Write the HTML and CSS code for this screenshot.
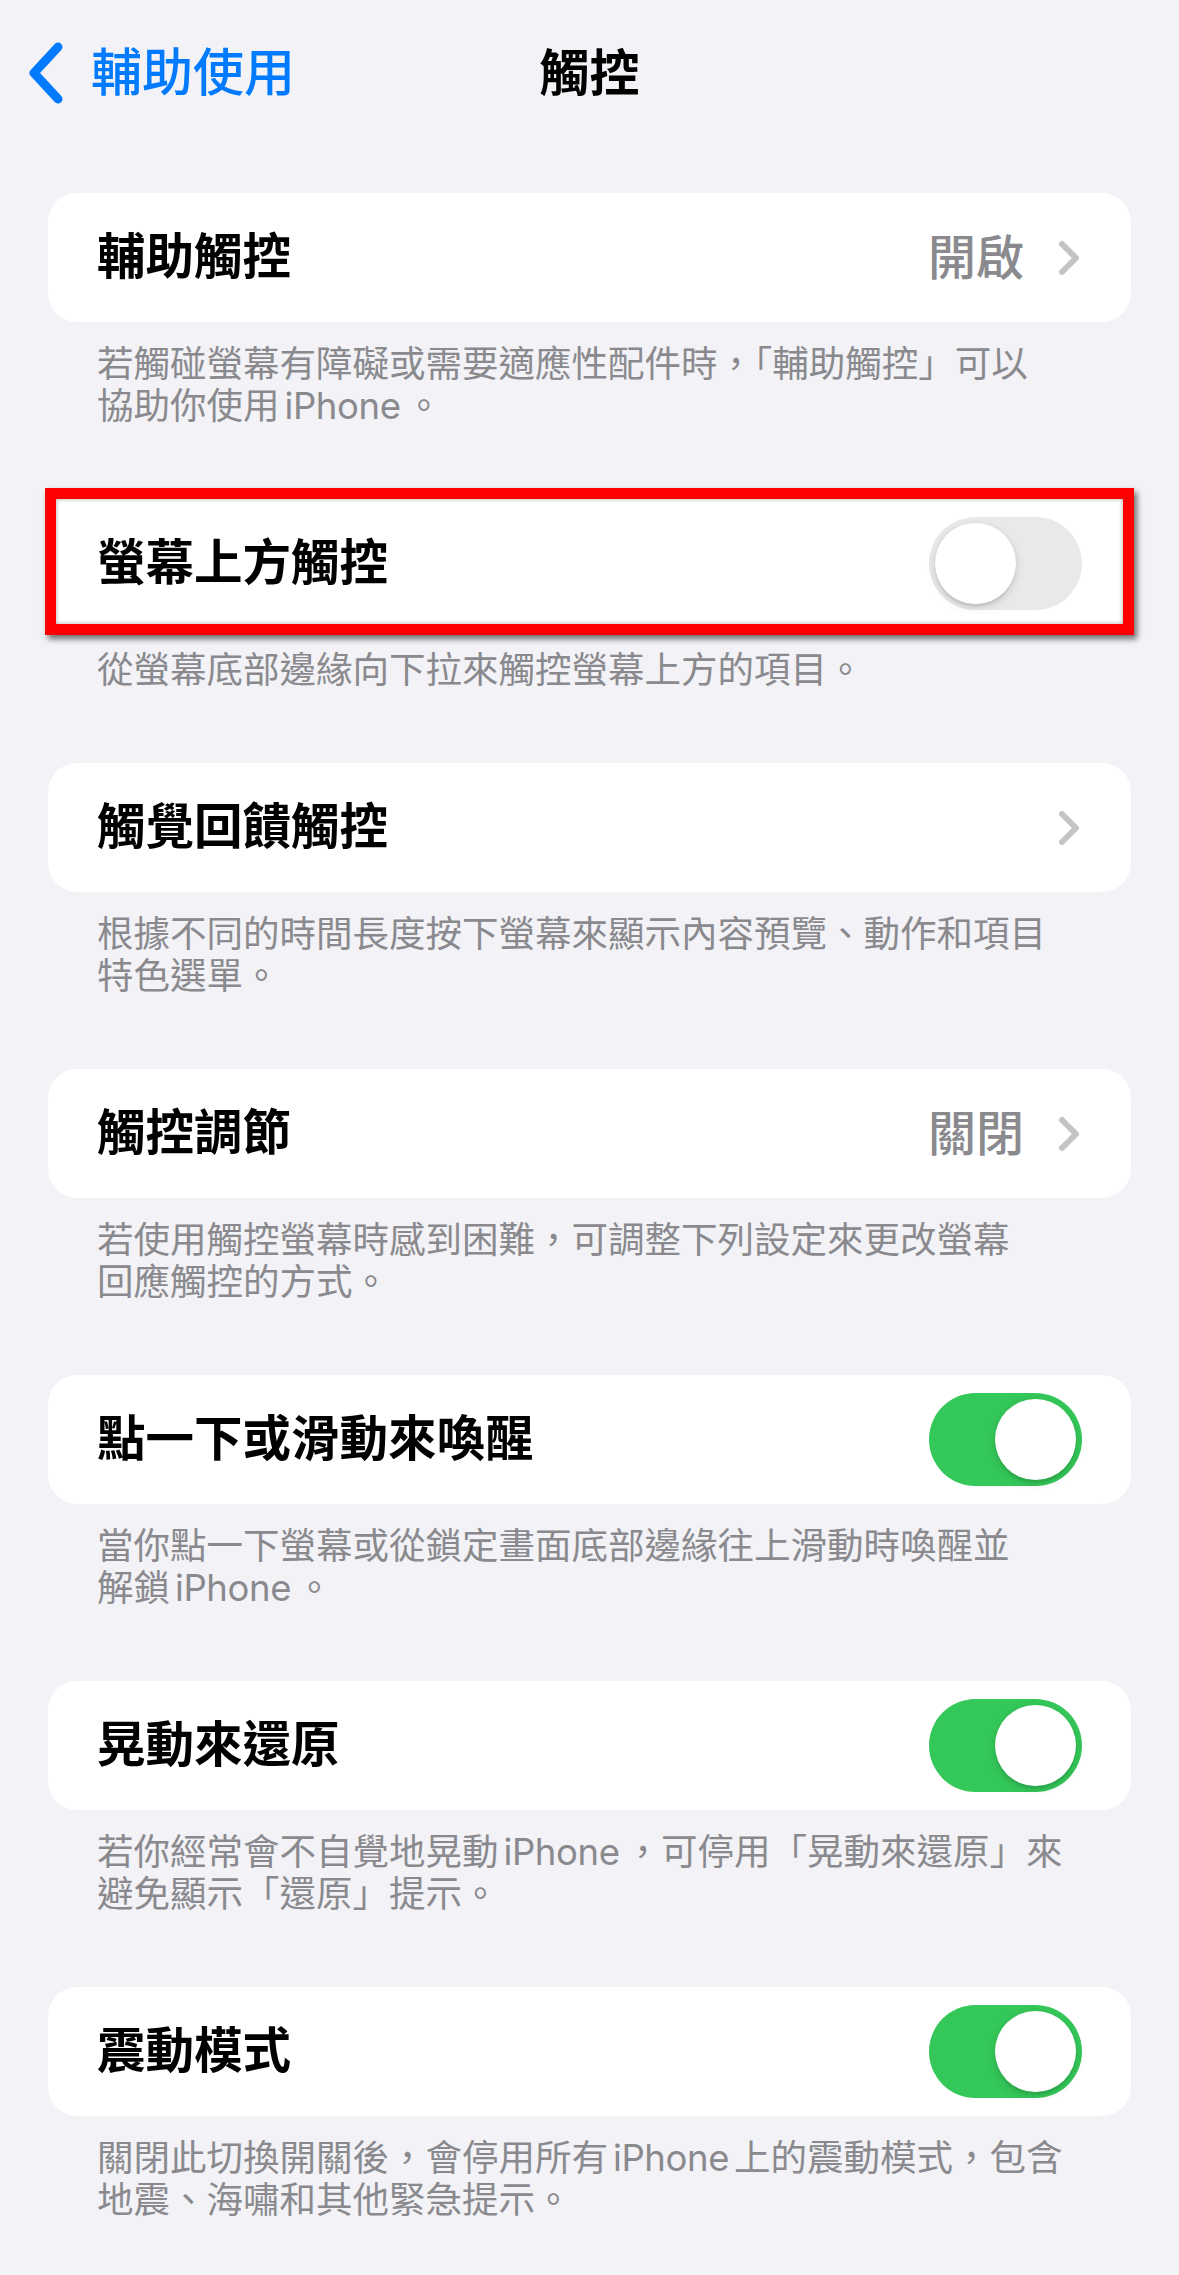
FILE: index.html
```html
<!DOCTYPE html>
<html lang="zh-Hant">
<head>
<meta charset="utf-8">
<title>觸控</title>
<link rel="stylesheet" href="styles.css">
</head>
<body>
<header class="nav">
  <div class="back">
    <svg class="back-chev" width="36" height="62" viewBox="0 0 36 62"><path d="M30 5 L6 31 L30 57" fill="none" stroke="#007aff" stroke-width="9" stroke-linecap="round" stroke-linejoin="round"/></svg>
    <span class="back-text">輔助使用</span>
  </div>
  <h1 class="nav-title">觸控</h1>
</header>

<main class="list">
  <section class="group">
    <div class="card">
      <span class="label">輔助觸控</span>
      <span class="detail">
        <span class="value">開啟</span>
        <svg class="chev" width="24" height="36" viewBox="0 0 24 36"><path d="M5 4 L19 18 L5 32" fill="none" stroke="#c4c4c7" stroke-width="6" stroke-linecap="round" stroke-linejoin="round"/></svg>
      </span>
    </div>
    <p class="foot">若觸碰螢幕有障礙或需要適應性配件時，<span class="half">「</span>輔助觸控」可以<br>協助你使用<span class="en">iPhone</span>。</p>
  </section>

  <section class="group">
    <div class="card card-marked">
      <span class="label">螢幕上方觸控</span>
      <span class="switch"><span class="knob"></span></span>
    </div>
    <p class="foot">從螢幕底部邊緣向下拉來觸控螢幕上方的項目。</p>
  </section>

  <section class="group">
    <div class="card">
      <span class="label">觸覺回饋觸控</span>
      <span class="detail">
        <svg class="chev" width="24" height="36" viewBox="0 0 24 36"><path d="M5 4 L19 18 L5 32" fill="none" stroke="#c4c4c7" stroke-width="6" stroke-linecap="round" stroke-linejoin="round"/></svg>
      </span>
    </div>
    <p class="foot">根據不同的時間長度按下螢幕來顯示內容預覽、動作和項目<br>特色選單。</p>
  </section>

  <section class="group">
    <div class="card">
      <span class="label">觸控調節</span>
      <span class="detail">
        <span class="value">關閉</span>
        <svg class="chev" width="24" height="36" viewBox="0 0 24 36"><path d="M5 4 L19 18 L5 32" fill="none" stroke="#c4c4c7" stroke-width="6" stroke-linecap="round" stroke-linejoin="round"/></svg>
      </span>
    </div>
    <p class="foot">若使用觸控螢幕時感到困難，可調整下列設定來更改螢幕<br>回應觸控的方式。</p>
  </section>

  <section class="group">
    <div class="card">
      <span class="label">點一下或滑動來喚醒</span>
      <span class="switch on"><span class="knob"></span></span>
    </div>
    <p class="foot">當你點一下螢幕或從鎖定畫面底部邊緣往上滑動時喚醒並<br>解鎖<span class="en">iPhone</span>。</p>
  </section>

  <section class="group">
    <div class="card">
      <span class="label">晃動來還原</span>
      <span class="switch on"><span class="knob"></span></span>
    </div>
    <p class="foot">若你經常會不自覺地晃動<span class="en">iPhone</span>，可停用「晃動來還原」來<br>避免顯示「還原」提示。</p>
  </section>

  <section class="group">
    <div class="card">
      <span class="label">震動模式</span>
      <span class="switch on"><span class="knob"></span></span>
    </div>
    <p class="foot">關閉此切換開關後，會停用所有<span class="en">iPhone</span>上的震動模式，包含<br>地震、海嘯和其他緊急提示。</p>
  </section>
</main>
</body>
</html>
```

FILE: styles.css
```css
* { box-sizing: border-box; }

html, body {
  margin: 0;
  padding: 0;
  background: #f2f2f7;
}

body {
  width: 1179px;
  min-height: 2275px;
  font-family: "Inter", "Noto Sans CJK TC", "Noto Sans CJK SC", sans-serif;
  color: #000;
}

.nav {
  position: relative;
  height: 146px;
  display: flex;
  align-items: center;
  justify-content: center;
}

.back {
  position: absolute;
  left: 28px;
  top: 0;
  height: 146px;
  display: flex;
  align-items: center;
  gap: 27px;
  color: #007aff;
}

.back-chev { display: block; }

.back-text {
  font-size: 51px;
  line-height: 1;
  font-weight: 500;
  padding-bottom: 2px;
}

.nav-title {
  margin: 0;
  font-size: 50px;
  font-weight: 700;
  line-height: 1;
}

.list {
  padding: 47px 48px 0 48px;
  display: flex;
  flex-direction: column;
  gap: 72px;
}

.group { margin: 0; }

.card {
  position: relative;
  height: 129px;
  background: #fff;
  border-radius: 29px;
  display: flex;
  align-items: center;
  justify-content: space-between;
  padding: 0 49px 0 49px;
}

.card-marked {
  border-radius: 0;
}

.card-marked::after {
  content: "";
  position: absolute;
  left: -3px;
  right: -3px;
  top: -11px;
  bottom: -7px;
  border: 11px solid #ff0000;
  box-shadow: 3px 4px 6px rgba(0, 0, 0, 0.55), inset 0 0 4px rgba(0, 0, 0, 0.35);
  pointer-events: none;
}

.label {
  font-size: 48.5px;
  font-weight: 600;
  line-height: 1;
}

.detail {
  display: flex;
  align-items: center;
  gap: 33px;
  margin-right: 1px;
}

.value {
  font-size: 48px;
  font-weight: 500;
  color: #8a8a8e;
  line-height: 1;
}

.chev { display: block; }

.switch {
  position: relative;
  width: 153px;
  height: 93px;
  border-radius: 47px;
  background: #e9e9eb;
  flex: none;
}

.switch.on { background: #34c759; }

.knob {
  position: absolute;
  top: 6px;
  left: 6px;
  width: 81px;
  height: 81px;
  border-radius: 50%;
  background: #fff;
  box-shadow: 0 3px 8px rgba(0, 0, 0, 0.15), 0 3px 1px rgba(0, 0, 0, 0.06);
}

.switch.on .knob { left: 66px; }

.foot {
  margin: 0;
  padding: 21px 49px 0 49px;
  font-size: 36.5px;
  line-height: 42px;
  color: #8a8a8e;
  white-space: nowrap;
}

.en {
  margin: 0 5px;
  letter-spacing: -0.4px;
}

.half {
  font-feature-settings: "halt" 1;
}
```
